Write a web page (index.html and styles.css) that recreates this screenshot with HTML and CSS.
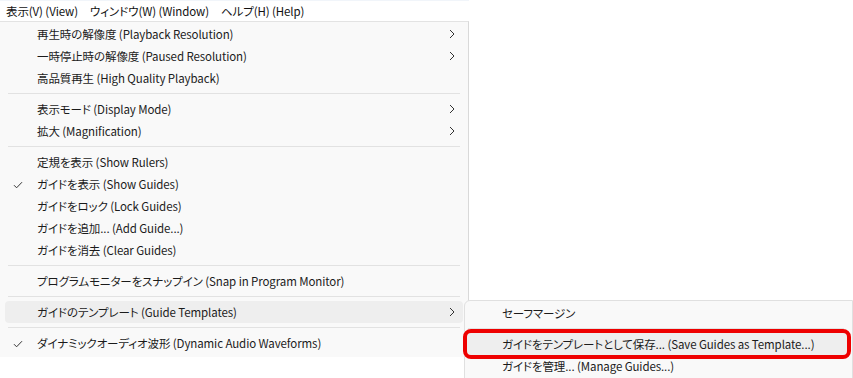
FILE: index.html
```html
<!DOCTYPE html>
<html lang="ja">
<head>
    <meta charset="UTF-8">
    <meta name="viewport" content="width=device-width, initial-scale=1.0">
    <title>表示メニュー</title>
    <link rel="stylesheet" href="styles.css">
</head>
<body>

<div class="menubar">
    <span class="bar-item">表示(V) (View)</span>
    <span class="bar-item">ウィンドウ(W) (Window)</span>
    <span class="bar-item">ヘルプ(H) (Help)</span>
</div>

<div class="menu">
    <div class="item"><span class="label">再生時の解像度 (Playback Resolution)</span><svg class="arrow" width="6" height="10" viewBox="0 0 6 10"><polyline points="1,1 5,5 1,9"/></svg></div>
    <div class="item"><span class="label">一時停止時の解像度 (Paused Resolution)</span><svg class="arrow" width="6" height="10" viewBox="0 0 6 10"><polyline points="1,1 5,5 1,9"/></svg></div>
    <div class="item"><span class="label">高品質再生 (High Quality Playback)</span></div>
    <div class="sep"></div>
    <div class="item"><span class="label">表示モード (Display Mode)</span><svg class="arrow" width="6" height="10" viewBox="0 0 6 10"><polyline points="1,1 5,5 1,9"/></svg></div>
    <div class="item"><span class="label">拡大 (Magnification)</span><svg class="arrow" width="6" height="10" viewBox="0 0 6 10"><polyline points="1,1 5,5 1,9"/></svg></div>
    <div class="sep"></div>
    <div class="item"><span class="label">定規を表示 (Show Rulers)</span></div>
    <div class="item"><svg class="check" width="10" height="8" viewBox="0 0 10 8"><polyline points="1,4.2 3.6,6.8 9,1.2"/></svg><span class="label">ガイドを表示 (Show Guides)</span></div>
    <div class="item"><span class="label">ガイドをロック (Lock Guides)</span></div>
    <div class="item"><span class="label">ガイドを追加... (Add Guide...)</span></div>
    <div class="item"><span class="label">ガイドを消去 (Clear Guides)</span></div>
    <div class="sep"></div>
    <div class="item"><span class="label">プログラムモニターをスナップイン (Snap in Program Monitor)</span></div>
    <div class="sep"></div>
    <div class="item active"><span class="label">ガイドのテンプレート (Guide Templates)</span><svg class="arrow" width="6" height="10" viewBox="0 0 6 10"><polyline points="1,1 5,5 1,9"/></svg></div>
    <div class="sep"></div>
    <div class="item"><svg class="check" width="10" height="8" viewBox="0 0 10 8"><polyline points="1,4.2 3.6,6.8 9,1.2"/></svg><span class="label">ダイナミックオーディオ波形 (Dynamic Audio Waveforms)</span></div>
</div>

<div class="submenu">
    <div class="sub-item">セーフマージン</div>
    <div class="sub-sep"></div>
    <div class="sub-item active marked">ガイドをテンプレートとして保存... (Save Guides as Template...)</div>
    <div class="sub-item">ガイドを管理... (Manage Guides...)</div>
</div>

</body>
</html>
```

FILE: styles.css
```css
body {
    font-family: "Noto Sans CJK JP", "Noto Sans", sans-serif;
    font-size: 11.5px;
    font-feature-settings: "palt";
    letter-spacing: -0.1px;
    color: #1b1b1b;
    background-color: white;
    margin: 0;
    padding: 0;
    overflow: hidden;
}

.menubar {
    width: 469px;
    height: 21px;
    border-top: 1px solid #f1f5fa;
    display: flex;
    align-items: center;
    box-sizing: border-box;
}

.bar-item {
    padding: 0 6px;
    color: #111;
}

.menu {
    width: 469px;
    box-sizing: border-box;
    background-color: #f9f9f9;
    border-top: 1px solid #e3e3e3;
    border-right: 1px solid #d9d9d9;
    padding: 1px 0 3px 0;
}

.item {
    position: relative;
    height: 22px;
    margin: 0 5px;
    padding-left: 32px;
    display: flex;
    align-items: center;
    border-radius: 4px;
}

.item.active {
    background-color: #eeeeee;
}

.label {
    flex: 1;
    white-space: nowrap;
}

.arrow {
    margin-right: 8px;
}

.arrow polyline,
.check polyline {
    fill: none;
    stroke: #333;
    stroke-width: 1;
}

.check {
    position: absolute;
    left: 8px;
    top: 8px;
}

.sep {
    height: 1px;
    margin: 4px 8px;
    background-color: #e2e2e2;
}

.submenu {
    position: absolute;
    left: 464px;
    top: 300px;
    width: 389px;
    box-sizing: border-box;
    background-color: #f9f9f9;
    border: 1px solid #e0e0e0;
    border-radius: 6px 0 0 0;
    padding: 1px 0 6px 0;
}

.sub-item {
    height: 22px;
    margin: 0 5px 0 2px;
    padding-left: 35px;
    display: flex;
    align-items: center;
    border-radius: 3px;
    white-space: nowrap;
}

.sub-item.active {
    background-color: #eeeeee;
}

.sub-item.marked {
    outline: 4px solid #ee0000;
    border-radius: 4px;
}

.sub-sep {
    height: 1px;
    margin: 4px 8px 4px 3px;
    background-color: #e2e2e2;
}
```
